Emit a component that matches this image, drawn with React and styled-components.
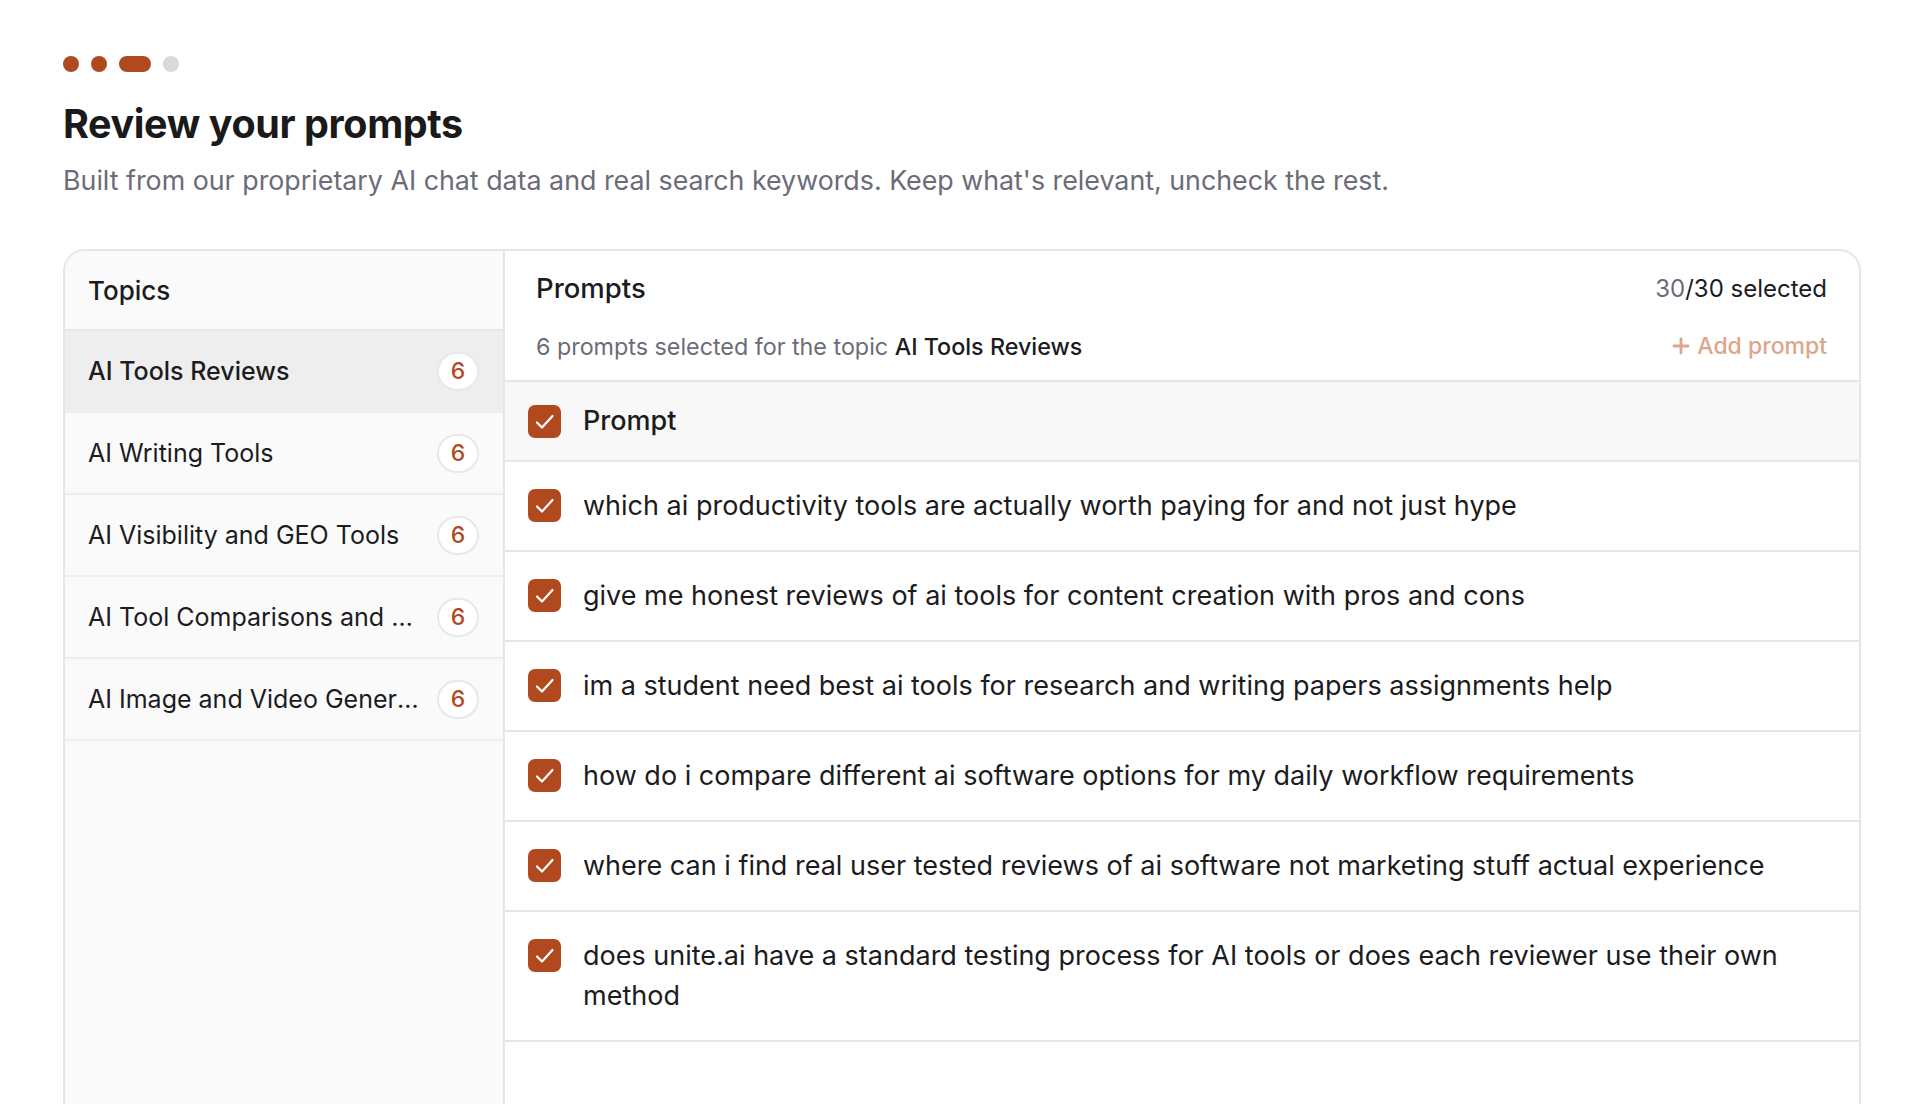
import React from "react";
import styled, { createGlobalStyle } from "styled-components";

const GlobalStyle = createGlobalStyle`
  html, body {
    margin: 0;
    padding: 0;
    background: #ffffff;
    overflow: hidden;
  }
  body {
    font-family: Inter, "Noto Sans", "Liberation Sans", sans-serif;
    color: #1c1c1e;
    -webkit-font-smoothing: antialiased;
  }
`;

const ORANGE = "#b1491f";

const Page = styled.main`
  padding: 56px 63px 0;
`;

const Steps = styled.div`
  display: flex;
  align-items: center;
  gap: 12px;
  height: 16px;
`;

const Step = styled.span`
  display: block;
  height: 16px;
  width: ${(p) => (p.current ? "32px" : "16px")};
  border-radius: 8px;
  background: ${(p) => (p.done ? ORANGE : "#d9d9d9")};
`;

const Title = styled.h1`
  margin: 28px 0 0;
  font-size: 39.5px;
  line-height: 48px;
  font-weight: 700;
  letter-spacing: -0.4px;
  color: #1a1a1a;
`;

const Lead = styled.p`
  margin: 15px 0 0;
  font-size: 26.8px;
  line-height: 34px;
  color: #6b6c78;
`;

const Card = styled.section`
  margin-top: 52px;
  height: 900px;
  display: grid;
  grid-template-columns: 440px 1fr;
  border: 2px solid #e6e6e6;
  border-radius: 22px;
  overflow: hidden;
  background: #ffffff;
`;

const Sidebar = styled.aside`
  background: #fafafa;
  border-right: 2px solid #e6e6e6;
`;

const SidebarHead = styled.div`
  height: 78px;
  display: flex;
  align-items: center;
  padding: 0 23px;
  border-bottom: 2px solid #e8e8e8;
  font-size: 26px;
  font-weight: 500;
`;

const Topic = styled.div`
  height: 80px;
  display: flex;
  align-items: center;
  gap: 12px;
  padding: 0 24px 0 23px;
  border-bottom: 2px solid #eeeeee;
  background: ${(p) => (p.active ? "#eeeeee" : "transparent")};
  font-size: 25px;
  font-weight: ${(p) => (p.active ? 500 : 400)};
`;

const TopicName = styled.span`
  flex: 1;
  min-width: 0;
  white-space: nowrap;
  overflow: hidden;
  text-overflow: ellipsis;
`;

const Count = styled.span`
  flex: none;
  width: 42px;
  height: 39px;
  box-sizing: border-box;
  display: flex;
  align-items: center;
  justify-content: center;
  border: 2px solid #e8e8e8;
  border-radius: 20px;
  background: #ffffff;
  color: ${ORANGE};
  font-size: 23px;
  font-weight: 500;
`;

const Panel = styled.div`
  display: flex;
  flex-direction: column;
  min-width: 0;
`;

const PanelHead = styled.header`
  height: 131px;
  box-sizing: border-box;
  padding: 19px 32px 0 31px;
  border-bottom: 2px solid #e6e6e6;
`;

const HeadRow = styled.div`
  display: flex;
  align-items: center;
  justify-content: space-between;
  height: 36px;
  & + & {
    margin-top: 22px;
  }
`;

const PanelTitle = styled.h2`
  margin: 0;
  font-size: 27.5px;
  font-weight: 500;
`;

const Selected = styled.span`
  font-size: 24px;
  color: #1c1c1e;
  b {
    font-weight: 400;
    color: #6b6c78;
  }
`;

const Meta = styled.span`
  font-size: 23.3px;
  color: #6b6c78;
  strong {
    font-weight: 500;
    color: #1c1c1e;
  }
`;

const AddButton = styled.button`
  display: flex;
  align-items: center;
  gap: 7px;
  padding: 0;
  border: none;
  background: none;
  font: inherit;
  font-size: 23px;
  font-weight: 500;
  color: #dca68d;
  cursor: pointer;
`;

const Row = styled.div`
  display: flex;
  align-items: ${(p) => (p.head ? "center" : "flex-start")};
  gap: 22px;
  padding: ${(p) => (p.head ? "0 23px" : "24px 60px 24px 23px")};
  height: ${(p) => (p.head ? "78px" : "auto")};
  background: ${(p) => (p.head ? "#f8f8f8" : "#ffffff")};
  border-bottom: 2px solid #e6e6e6;
  font-size: 27px;
  font-weight: ${(p) => (p.head ? 500 : 400)};
  line-height: 40px;
`;

const Box = styled.span`
  flex: none;
  width: 33px;
  height: 33px;
  margin-top: ${(p) => (p.head ? "0" : "3px")};
  border-radius: 7px;
  background: ${ORANGE};
  display: flex;
  align-items: center;
  justify-content: center;
`;

const Check = ({ head }) => (
  <Box head={head}>
    <svg width="33" height="33" viewBox="0 0 33 33" fill="none">
      <path
        d="M9 17.5l5 5L24.5 11"
        stroke="#ffffff"
        strokeWidth="2.2"
        strokeLinecap="round"
        strokeLinejoin="round"
      />
    </svg>
  </Box>
);

const topics = [
  "AI Tools Reviews",
  "AI Writing Tools",
  "AI Visibility and GEO Tools",
  "AI Tool Comparisons and Alternatives",
  "AI Image and Video Generators",
];

const prompts = [
  "which ai productivity tools are actually worth paying for and not just hype",
  "give me honest reviews of ai tools for content creation with pros and cons",
  "im a student need best ai tools for research and writing papers assignments help",
  "how do i compare different ai software options for my daily workflow requirements",
  "where can i find real user tested reviews of ai software not marketing stuff actual experience",
  "does unite.ai have a standard testing process for AI tools or does each reviewer use their own method",
];

export default function App() {
  return (
    <>
      <GlobalStyle />
      <Page>
        <Steps>
          <Step done />
          <Step done />
          <Step done current />
          <Step />
        </Steps>
        <Title>Review your prompts</Title>
        <Lead>
          Built from our proprietary AI chat data and real search keywords. Keep
          what's relevant, uncheck the rest.
        </Lead>

        <Card>
          <Sidebar>
            <SidebarHead>Topics</SidebarHead>
            {topics.map((t, i) => (
              <Topic key={t} active={i === 0}>
                <TopicName>{t}</TopicName>
                <Count>6</Count>
              </Topic>
            ))}
          </Sidebar>

          <Panel>
            <PanelHead>
              <HeadRow>
                <PanelTitle>Prompts</PanelTitle>
                <Selected>
                  <b>30</b>/30 selected
                </Selected>
              </HeadRow>
              <HeadRow>
                <Meta>
                  6 prompts selected for the topic <strong>AI Tools Reviews</strong>
                </Meta>
                <AddButton>
                  <svg width="18" height="18" viewBox="0 0 18 18" fill="none">
                    <path
                      d="M9 2v14M2 9h14"
                      stroke="currentColor"
                      strokeWidth="2.8"
                      strokeLinecap="round"
                    />
                  </svg>
                  Add prompt
                </AddButton>
              </HeadRow>
            </PanelHead>

            <Row head>
              <Check head />
              <span>Prompt</span>
            </Row>
            {prompts.map((p) => (
              <Row key={p}>
                <Check />
                <span>{p}</span>
              </Row>
            ))}
          </Panel>
        </Card>
      </Page>
    </>
  );
}
